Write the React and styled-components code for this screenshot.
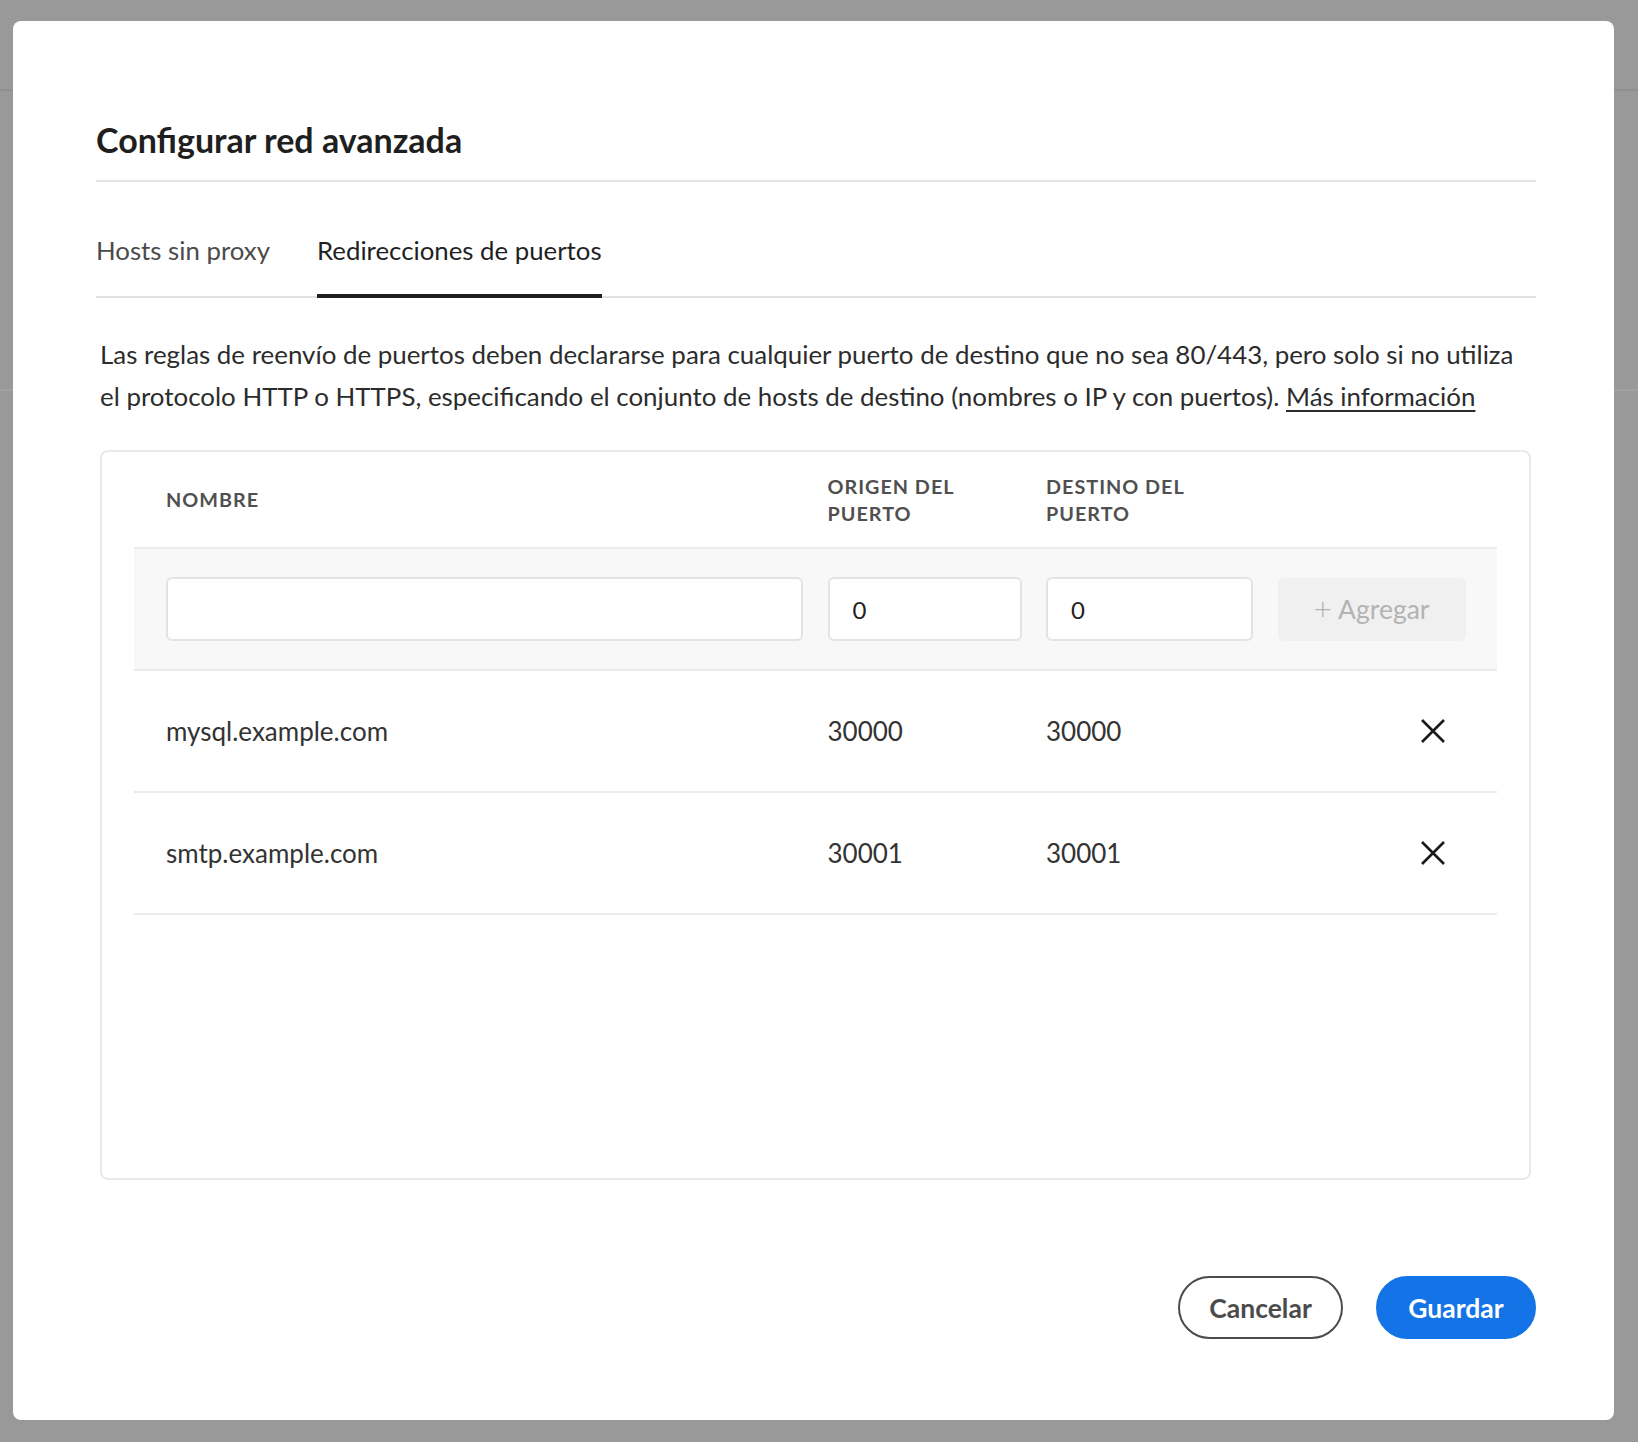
import React, { useState } from "react";
import styled, { createGlobalStyle } from "styled-components";

const GlobalStyle = createGlobalStyle`
  * {
    box-sizing: border-box;
  }
  body {
    margin: 0;
    font-family: Lato, "Liberation Sans", sans-serif;
    background: #999999;
  }
`;

const Backdrop = styled.div`
  min-height: 1442px;
  padding: 21px 24px 22px 13px;
  background: linear-gradient(
    #999999 0 89px,
    #8f8f8f 89px 91px,
    #999999 91px 389px,
    #a2a2a2 389px 391px,
    #999999 391px
  );
`;

const Modal = styled.div`
  width: 1601px;
  height: 1399px;
  background: #ffffff;
  border-radius: 8px;
  padding: 99px 78px 0 83px;
  display: flex;
  flex-direction: column;
`;

const Title = styled.h2`
  margin: 0;
  font-size: 34px;
  line-height: 40px;
  font-weight: 700;
  color: #1f1f1f;
  padding-bottom: 20px;
  border-bottom: 2px solid #e4e4e4;
`;

const TabList = styled.div`
  display: flex;
  gap: 47px;
  margin-top: 48px;
  border-bottom: 2px solid #e1e1e1;
`;

const Tab = styled.button`
  background: none;
  border: none;
  padding: 0 0 24px;
  margin-bottom: -2px;
  font-family: inherit;
  font-size: 25.8px;
  line-height: 40px;
  cursor: pointer;
  color: ${(p) => (p.$active ? "#1f1f1f" : "#4b4b4b")};
  border-bottom: 4px solid ${(p) => (p.$active ? "#1f1f1f" : "transparent")};
`;

const Description = styled.p`
  margin: 35px 0 0;
  padding: 0 16px 0 4px;
  font-size: 25.9px;
  line-height: 42px;
  color: #2c2c2c;
`;

const MoreLink = styled.a`
  color: #2c2c2c;
  text-decoration: underline;
  text-underline-offset: 4px;
`;

const Card = styled.div`
  margin: 33px 5px 0 4px;
  height: 730px;
  border: 2px solid #e9e9e9;
  border-radius: 8px;
  padding: 0 32px;
`;

const Row = styled.div`
  display: grid;
  grid-template-columns: 637px 194px 207px 188px;
  column-gap: 24.5px;
  align-items: center;
  padding: 0 32px;
  height: ${(p) => p.$height}px;
  background: ${(p) => p.$bg || "transparent"};
  border-bottom: 2px solid #ebebeb;
`;

const HeadCell = styled.div`
  font-size: 19.8px;
  line-height: 27px;
  font-weight: 700;
  letter-spacing: 1px;
  color: #505050;
  text-transform: uppercase;
  max-width: 160px;
`;

const Cell = styled.div`
  font-size: 26px;
  color: #333333;
`;

const Input = styled.input`
  width: 100%;
  height: 64px;
  border: 2px solid #e3e3e3;
  border-radius: 6px;
  background: #ffffff;
  padding: 0 23px;
  font-family: inherit;
  font-size: 24px;
  color: #1f1f1f;
  outline: none;
`;

const AddButton = styled.button`
  height: 63px;
  border: none;
  border-radius: 6px;
  background: #f0f0f0;
  color: #b3b3b3;
  font-family: inherit;
  font-size: 26.5px;
  display: flex;
  align-items: center;
  justify-content: center;
  gap: 6px;
`;

const Plus = styled.span`
  font-size: 32px;
  font-weight: 300;
  line-height: 1;
  margin-top: -3px;
`;

const RemoveButton = styled.button`
  justify-self: end;
  margin-right: 13px;
  width: 40px;
  height: 40px;
  border: none;
  background: none;
  padding: 0;
  display: flex;
  align-items: center;
  justify-content: center;
  cursor: pointer;
`;

const Footer = styled.div`
  display: flex;
  justify-content: flex-end;
  gap: 33px;
  margin-top: 96px;
`;

const PillButton = styled.button`
  height: 63px;
  min-width: ${(p) => p.$width}px;
  border-radius: 32px;
  font-family: inherit;
  font-size: 26.5px;
  font-weight: 700;
  cursor: pointer;
  border: 2px solid ${(p) => (p.$primary ? "#1473e6" : "#4b4b4b")};
  background: ${(p) => (p.$primary ? "#1473e6" : "#ffffff")};
  color: ${(p) => (p.$primary ? "#ffffff" : "#4b4b4b")};
`;

function CloseIcon() {
  return (
    <svg width="26" height="26" viewBox="0 0 26 26">
      <path d="M2 2 L24 24 M24 2 L2 24" stroke="#1a1a1a" strokeWidth="2.6" />
    </svg>
  );
}

const rules = [
  { id: 1, name: "mysql.example.com", from: "30000", to: "30000" },
  { id: 2, name: "smtp.example.com", from: "30001", to: "30001" },
];

export default function App() {
  const [tab, setTab] = useState("ports");
  const [items, setItems] = useState(rules);

  return (
    <>
      <GlobalStyle />
      <Backdrop>
        <Modal>
          <Title>Configurar red avanzada</Title>
          <TabList>
            <Tab $active={tab === "hosts"} onClick={() => setTab("hosts")}>
              Hosts sin proxy
            </Tab>
            <Tab $active={tab === "ports"} onClick={() => setTab("ports")}>
              Redirecciones de puertos
            </Tab>
          </TabList>
          <Description>
            Las reglas de reenvío de puertos deben declararse para cualquier puerto de destino que no sea
            80/443, pero solo si no utiliza el protocolo HTTP o HTTPS, especificando el conjunto de hosts de
            destino (nombres o IP y con puertos). <MoreLink href="#">Más información</MoreLink>
          </Description>
          <Card>
            <Row $height={97}>
              <HeadCell>Nombre</HeadCell>
              <HeadCell>Origen del puerto</HeadCell>
              <HeadCell>Destino del puerto</HeadCell>
            </Row>
            <Row $height={122} $bg="#f8f8f8">
              <Input />
              <Input defaultValue="0" />
              <Input defaultValue="0" />
              <AddButton>
                <Plus>+</Plus>
                Agregar
              </AddButton>
            </Row>
            {items.map((item) => (
              <Row key={item.id} $height={122}>
                <Cell>{item.name}</Cell>
                <Cell>{item.from}</Cell>
                <Cell>{item.to}</Cell>
                <RemoveButton onClick={() => setItems(items.filter((i) => i.id !== item.id))}>
                  <CloseIcon />
                </RemoveButton>
              </Row>
            ))}
          </Card>
          <Footer>
            <PillButton $width={165}>Cancelar</PillButton>
            <PillButton $primary $width={160}>Guardar</PillButton>
          </Footer>
        </Modal>
      </Backdrop>
    </>
  );
}
